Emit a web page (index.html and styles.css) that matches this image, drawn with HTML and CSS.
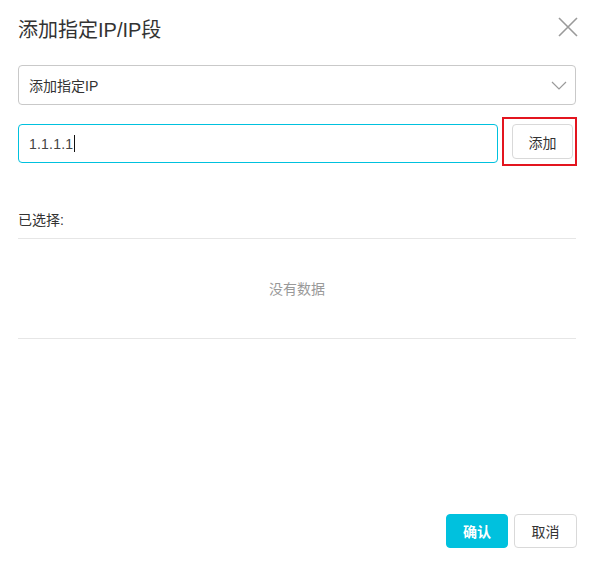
FILE: index.html
```html
<!DOCTYPE html>
<html lang="zh-CN">
<head>
<meta charset="utf-8">
<title>添加指定IP/IP段</title>
<link rel="stylesheet" href="styles.css">
</head>
<body>
<div class="dialog">
  <div class="header">
    <div class="title">添加指定IP/IP段</div>
    <svg class="close" width="20" height="20" viewBox="0 0 20 20"><path d="M1 1 L19 19 M19 1 L1 19" stroke="#9a9a9a" stroke-width="1.6" fill="none"/></svg>
  </div>
  <div class="select">
    <span class="select-text">添加指定IP</span>
    <svg class="chevron" width="16" height="9" viewBox="0 0 16 9"><path d="M1 1 L8 8 L15 1" stroke="#9a9a9a" stroke-width="1.2" fill="none"/></svg>
  </div>
  <div class="add-row">
    <div class="input"><span class="value">1.1.1.1</span><span class="caret"></span></div>
    <div class="add-wrap">
      <button class="btn add">添加</button>
      <div class="highlight"></div>
    </div>
  </div>
  <div class="selected-label">已选择:</div>
  <div class="empty">没有数据</div>
  <div class="footer">
    <button class="btn primary">确认</button>
    <button class="btn">取消</button>
  </div>
</div>
</body>
</html>
```
FILE: styles.css
```css
* { box-sizing: border-box; }
html, body { margin: 0; padding: 0; background: #fff; }
body {
  font-family: "Liberation Sans", Arial, "Noto Sans CJK SC", sans-serif;
  color: #333;
  font-size: 14px;
}
.dialog {
  height: 563px;
  display: flex;
  flex-direction: column;
  padding: 0 15px 15px 18px;
}
.header {
  height: 60px;
  display: flex;
  align-items: center;
  justify-content: space-between;
}
.title {
  font-size: 20px;
  color: #333;
  line-height: 24px;
}
.close {
  margin-top: -7px;
  margin-right: -2px;
}
.select {
  margin-top: 5px;
  height: 40px;
  border: 1px solid #c9c9c9;
  border-radius: 4px;
  display: flex;
  align-items: center;
  justify-content: space-between;
  padding: 0 8px 0 10px;
}
.select-text { font-size: 14px; color: #333; }
.chevron { margin-top: 1px; }
.add-row {
  margin-top: 19px;
  display: flex;
  align-items: flex-start;
}
.input {
  flex: 1;
  height: 39px;
  border: 1px solid #00c1de;
  border-radius: 4px;
  display: flex;
  align-items: center;
  padding: 0 10px;
  font-size: 14px;
  color: #444;
}
.value { letter-spacing: 0.2px; }
.caret {
  display: inline-block;
  width: 1px;
  height: 17px;
  background: #111;
  margin-left: 1px;
}
.add-wrap {
  position: relative;
  margin-left: 14px;
  margin-right: 3px;
}
.btn {
  font-family: "Liberation Sans", Arial, "Noto Sans CJK SC", sans-serif;
  font-size: 14px;
  color: #333;
  background: #fff;
  border: 1px solid #d9d9d9;
  border-radius: 4px;
  height: 35px;
  width: 62px;
  padding: 0;
  cursor: pointer;
}
.add { width: 61px; }
.highlight {
  position: absolute;
  top: -7px;
  bottom: -7px;
  left: -10px;
  right: -4px;
  border: 2px solid #e3151f;
}
.selected-label {
  margin-top: 47px;
  line-height: 20px;
  padding-bottom: 8px;
  border-bottom: 1px solid #e6e6e6;
}
.empty {
  height: 100px;
  border-bottom: 1px solid #e6e6e6;
  display: flex;
  align-items: center;
  justify-content: center;
  color: #999;
  font-size: 14px;
  padding-bottom: 2px;
}
.footer {
  margin-top: auto;
  margin-right: -1px;
  display: flex;
  justify-content: flex-end;
  gap: 6px;
}
.footer .btn { height: 34px; }
.footer .btn:last-child { width: 63px; }
.primary {
  background: #00c1de;
  border-color: #00c1de;
  color: #fff;
  font-weight: bold;
}
```
